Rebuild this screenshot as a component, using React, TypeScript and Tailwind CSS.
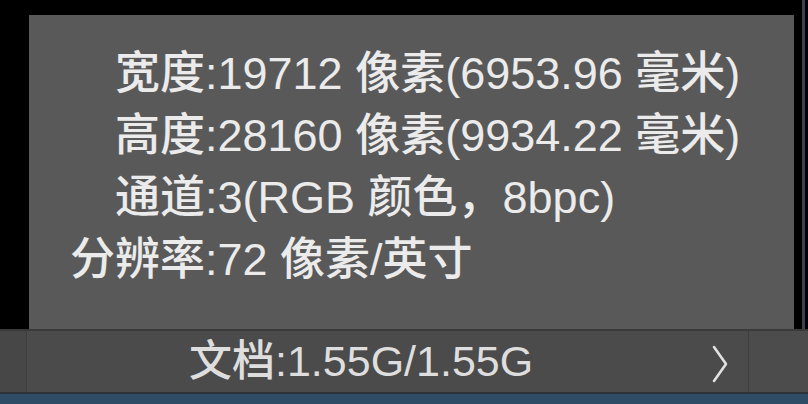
import React from "react";

const rows: Array<[string, string]> = [
  ["宽度:", "19712 像素(6953.96 毫米)"],
  ["高度:", "28160 像素(9934.22 毫米)"],
  ["通道:", "3(RGB 颜色，8bpc)"],
  ["分辨率:", "72 像素/英寸"],
];

function Chevron() {
  return (
    <svg width="18" height="40" viewBox="0 0 18 40" fill="none">
      <polyline
        points="3,3 15,20 3,37"
        stroke="#e2e2e2"
        strokeWidth="2.6"
        strokeLinecap="round"
        strokeLinejoin="round"
      />
    </svg>
  );
}

export default function App() {
  return (
    <div className="flex h-[404px] w-[808px] flex-col overflow-hidden bg-black font-['Liberation_Sans','Noto_Sans_CJK_SC',sans-serif] font-medium">
      {/* info popup */}
      <div className="flex h-[329px] shrink-0">
        <div className="w-[29px] shrink-0" />
        <div className="mt-[15px] w-[765px] shrink-0 bg-[#595959] pt-[28px] pl-[41px]">
          <div className="grid grid-cols-[auto_1fr] text-[45px] leading-[62px] text-[#ebebeb]">
            {rows.map(([label, value]) => (
              <React.Fragment key={label}>
                <span className="text-right">{label}</span>
                <span className="whitespace-nowrap">{value}</span>
              </React.Fragment>
            ))}
          </div>
        </div>
        <div className="w-[8px] shrink-0" />
        <div className="w-[3px] shrink-0 bg-[#3b4150]" />
      </div>

      {/* status bar */}
      <div className="h-[2px] shrink-0 bg-[#3a3a3a]" />
      <div className="flex h-[61px] shrink-0 bg-[#4b4b4b]">
        <div className="w-[27px] shrink-0 border-r border-[#3e3e3e] bg-[#474747]" />
        <div className="flex flex-1 items-center pl-[162px] pr-[19px] text-[43px] text-[#dedede]">
          <span className="whitespace-nowrap">文档:1.55G/1.55G</span>
          <span className="ml-auto mt-[4px]">
            <Chevron />
          </span>
        </div>
        <div className="w-[60px] shrink-0 border-l border-[#3e3e3e] bg-[#4c4c4c]" />
      </div>
      <div className="h-[2px] shrink-0 bg-[#2c3238]" />
      <div className="flex-1 bg-[#2f4c66]" />
    </div>
  );
}
